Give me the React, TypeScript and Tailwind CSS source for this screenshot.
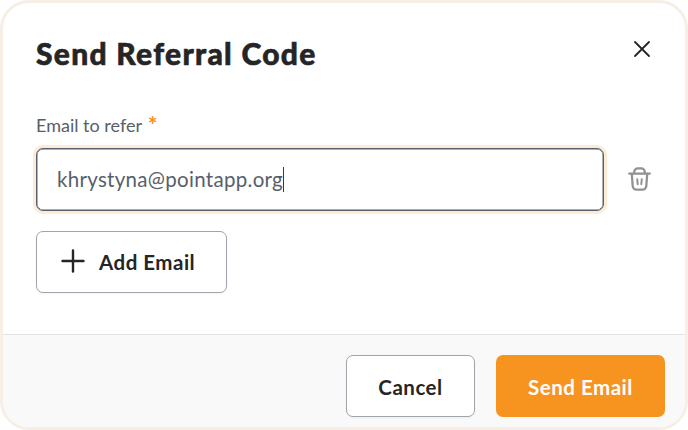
import type { ReactNode } from "react";

interface ButtonProps {
  children: ReactNode;
  className: string;
}

// Shared shape of the three dialog buttons
function Button({ children, className }: ButtonProps) {
  return (
    <button
      type="button"
      className={`flex shrink-0 items-center rounded-[7px] text-[20.5px] leading-6 font-bold tracking-[0.5px] whitespace-nowrap ${className}`}
    >
      {children}
    </button>
  );
}

function CloseIcon() {
  return (
    <svg width="18" height="18" viewBox="0 0 18 18" fill="none" stroke="#252525" strokeWidth="1.8" strokeLinecap="round">
      <path d="M2 2l14 14M16 2L2 16" />
    </svg>
  );
}

function PlusIcon() {
  return (
    <svg width="24" height="24" viewBox="0 0 24 24" fill="none" stroke="#252525" strokeWidth="2.4" strokeLinecap="round">
      <path d="M12 1.5v21M1.5 12h21" />
    </svg>
  );
}

function TrashIcon() {
  return (
    <svg width="23" height="24" viewBox="0 0 23 24" fill="none" stroke="#929292" strokeWidth="2.3" strokeLinecap="round" strokeLinejoin="round">
      {/* Lid and handle */}
      <path d="M1.2 6.6h20.6" />
      <path d="M6.2 6.2V5a3.6 3.6 0 0 1 3.6-3.6h3.4A3.6 3.6 0 0 1 16.8 5v1.2" />
      {/* Can */}
      <path d="M3.8 7l.9 12a3.8 3.8 0 0 0 3.8 3.6h6a3.8 3.8 0 0 0 3.800-3.600l.9-12" />
      <path d="M9.200 12.200l.5 5M13.800 12.200l-.5 5" strokeWidth="2" />
    </svg>
  );
}

export default function App() {
  return (
    <div className="flex h-[430px] w-[688px] flex-col overflow-hidden rounded-[29px] border-[3px] border-[#f7eee6] bg-white font-['Lato','Liberation_Sans',sans-serif] text-[#252525]">
      <header className="flex items-start justify-between pt-8 pr-[34px] pl-[33px]">
        <h2 className="text-[30px] leading-9 font-black tracking-[1.3px] whitespace-nowrap [-webkit-text-stroke:0.6px_#252525]">
          Send Referral Code
        </h2>
        <button type="button" aria-label="Close" className="mt-[5px]">
          <CloseIcon />
        </button>
      </header>

      <main className="flex flex-1 flex-col pt-[42px] pl-[33px]">
        <label className="flex h-6 items-center text-[18px] leading-6 whitespace-nowrap text-[#57606a]">
          Email to refer
          <span className="ml-1.5 text-[22px] font-black text-[#f7941f]">*</span>
        </label>

        {/* Focused email field */}
        <div className="mt-[11px] flex items-center gap-6">
          <div className="flex h-[63px] w-[568px] shrink-0 items-center rounded-[7px] border-[1.5px] border-[#596068] pl-5 text-[20.5px] tracking-[0.3px] text-[#57606a] shadow-[inset_0_0_0_0.5px_#596068] ring-3 ring-[#fdebd6]">
            <span className="whitespace-nowrap">khrystyna@pointapp.org</span>
            <span className="h-[25px] w-px bg-[#333b44]" />
          </div>
          <button type="button" aria-label="Remove email" className="mb-0.5">
            <TrashIcon />
          </button>
        </div>

        <Button className="mt-5 h-[62px] w-[191px] gap-3.5 border border-[#a0a4ab] bg-white pb-0.5 pl-6 shadow-xs">
          <PlusIcon />
          <span className="mt-0.5">Add Email</span>
        </Button>
      </main>

      <footer className="flex h-[93px] items-start justify-end gap-[21px] border-t border-[#e2e2e3] bg-[#f9f9f9] pt-5 pr-5">
        <Button className="h-[62px] w-[129px] justify-center border border-[#a0a4ab] bg-white pt-0.5 shadow-xs">
          <span>Cancel</span>
        </Button>
        <Button className="h-[62px] w-[169px] justify-center bg-[#f7941f] pt-0.5 text-white">
          <span>Send Email</span>
        </Button>
      </footer>
    </div>
  );
}
